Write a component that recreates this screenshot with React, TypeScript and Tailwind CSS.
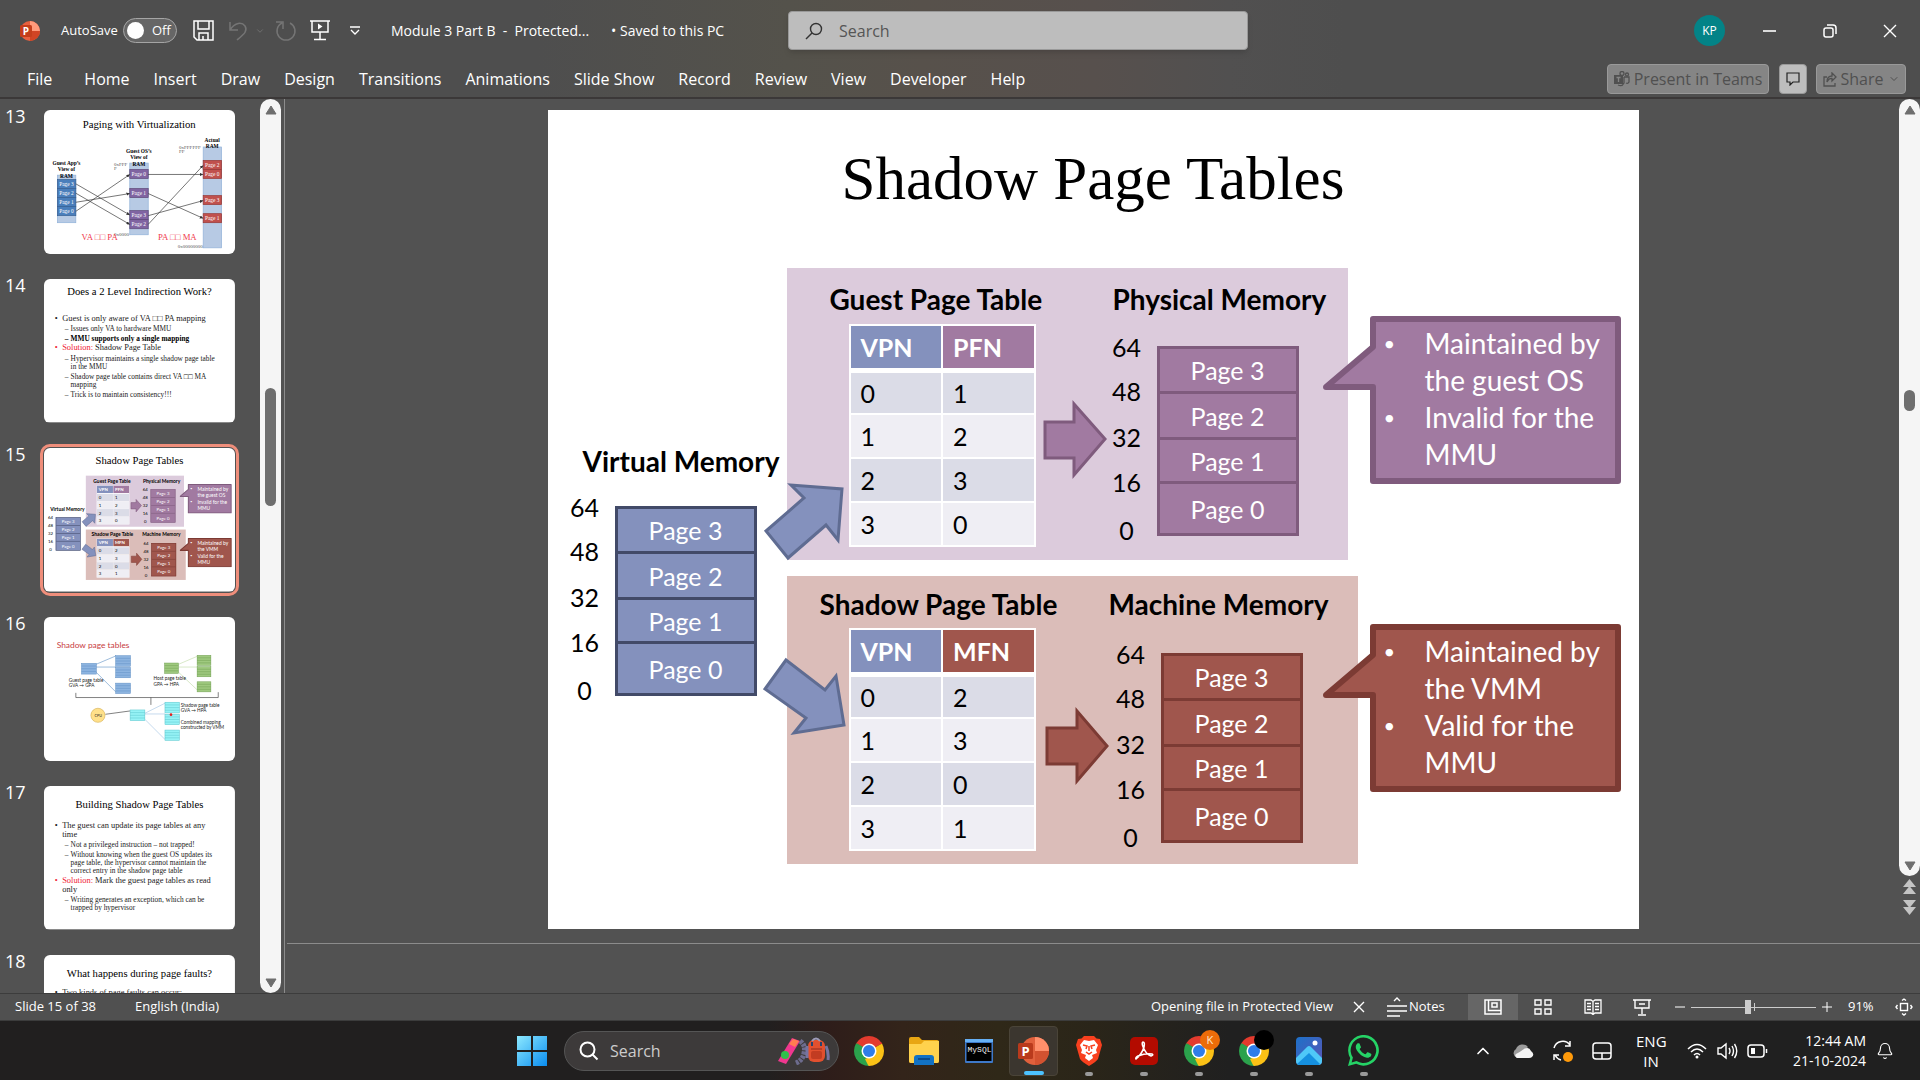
import React from 'react';
import { ChevronDown, ChevronUp, Bell } from 'lucide-react';

/* ---------- Slide content ---------- */

type Tone = 'blue' | 'purple' | 'red';

const stackTone: Record<Tone, string> = {
  blue: 'bg-[#8491bd] border-[#424a68] divide-[#424a68]',
  purple: 'bg-[#a17aa1] border-[#7f5b7d] divide-[#7f5b7d]',
  red: 'bg-[#a0564d] border-[#7c3b34] divide-[#7c3b34]',
};

function Heading({ at, children }: { at: string; children: React.ReactNode }) {
  return <h3 className={`absolute whitespace-nowrap text-[28px] font-bold leading-8 text-black ${at}`}>{children}</h3>;
}

function MemoryStack({ at, tone }: { at: string; tone: Tone }) {
  return (
    <div className={`absolute flex items-start text-[25px] ${at}`}>
      <div className="-mt-[14px] grid w-10 grid-rows-[44px_46px_45px_48px_30px] text-center leading-[30px] text-black">
        {[64, 48, 32, 16, 0].map((n) => (
          <span key={n}>{n}</span>
        ))}
      </div>
      <div
        className={`ml-[10px] grid h-[190px] w-[142px] grid-rows-[46fr_47fr_45fr_50fr] divide-y-[3px] border-[3px] text-center leading-[30px] text-white ${stackTone[tone]}`}
      >
        {[3, 2, 1, 0].map((n) => (
          <div key={n} className="flex items-center justify-center">
            Page {n}
          </div>
        ))}
      </div>
    </div>
  );
}

function PageTable({ at, second, head, values }: { at: string; second: string; head: string; values: number[] }) {
  return (
    <table className={`absolute w-[187px] table-fixed border-collapse border-2 border-white text-left text-[25px] leading-[30px] text-black ${at}`}>
      <thead>
        <tr className="h-[45px] border-b-[5px] border-white text-white">
          <th className="border-r-2 border-white bg-[#8491bd] pl-[10px] font-bold">VPN</th>
          <th className={`pl-[10px] font-bold ${head}`}>{second}</th>
        </tr>
      </thead>
      <tbody>
        {values.map((v, i) => (
          <tr key={i} className="h-11 border-b-2 border-white odd:bg-[#dbdce7] even:bg-[#efeef4]">
            <td className="border-r-2 border-white pl-[10px]">{i}</td>
            <td className="pl-[10px]">{v}</td>
          </tr>
        ))}
      </tbody>
    </table>
  );
}

function Callout({ at, fill, stroke, items }: { at: string; fill: string; stroke: string; items: string[][] }) {
  return (
    <div className={`absolute h-[168px] w-[298px] ${at}`}>
      <svg className="absolute inset-0" width="298" height="168" viewBox="0 0 298 168">
        <path d="M50 3H295V165H50V71H3L50 31Z" fill={fill} stroke={stroke} strokeWidth="6" strokeLinejoin="round" />
      </svg>
      <ul className="relative pl-[102px] pt-[9px] text-[28px] leading-[37px] text-white">
        {items.map((lines) => (
          <li key={lines[0]} className="relative whitespace-nowrap">
            <span className="absolute -left-[41px] text-xl leading-[37px]">•</span>
            {lines.map((l) => (
              <span key={l} className="block">
                {l}
              </span>
            ))}
          </li>
        ))}
      </ul>
    </div>
  );
}

function ShadowSlide() {
  return (
    <div className="relative h-[819px] w-[1091px] bg-white font-['Lato',sans-serif]">
      <h2 className="pt-[34px] text-center font-['Liberation_Serif',serif] text-[61px] leading-[70px] text-black">Shadow Page Tables</h2>
      <div className="absolute left-[239px] top-[158px] h-[292px] w-[561px] bg-[#dccbdc]" />
      <div className="absolute left-[239px] top-[466px] h-[288px] w-[571px] bg-[#dbbdb9]" />

      <Heading at="left-[35px] top-[335px]">Virtual Memory</Heading>
      <MemoryStack at="left-[17px] top-[396px]" tone="blue" />

      <Heading at="left-[282px] top-[173px]">Guest Page Table</Heading>
      <PageTable at="left-[301px] top-[214px]" second="PFN" head="bg-[#a17aa1]" values={[1, 2, 3, 0]} />
      <Heading at="left-[565px] top-[173px]">Physical Memory</Heading>
      <MemoryStack at="left-[559px] top-[236px]" tone="purple" />

      <Heading at="left-[272px] top-[478px]">Shadow Page Table</Heading>
      <PageTable at="left-[301px] top-[518px]" second="MFN" head="bg-[#a0564d]" values={[2, 3, 0, 1]} />
      <Heading at="left-[561px] top-[478px]">Machine Memory</Heading>
      <MemoryStack at="left-[563px] top-[543px]" tone="red" />

      <svg className="absolute inset-0" width="1091" height="819" viewBox="547 109 1091 819" strokeWidth="3">
        <path d="M765 530L803 497L790 484L841 488L837 539L825 524L787 557Z" fill="#8491bd" stroke="#5f6c92" />
        <path d="M785 659L824 689L835 675L843 724L793 732L805 717L764 688Z" fill="#8491bd" stroke="#5f6c92" />
        <path d="M1044 421H1073V403L1104 438L1073 474V457H1044Z" fill="#a17aa1" stroke="#7f5b7d" />
        <path d="M1046 727H1076V710L1106 745L1076 780V763H1046Z" fill="#a0564d" stroke="#7c3b34" />
      </svg>

      <Callout
        at="left-[775px] top-[206px]"
        fill="#a17aa1"
        stroke="#7f5b7d"
        items={[['Maintained by', 'the guest OS'], ['Invalid for the', 'MMU']]}
      />
      <Callout
        at="left-[775px] top-[514px]"
        fill="#a0564d"
        stroke="#7c3b34"
        items={[['Maintained by', 'the VMM'], ['Valid for the', 'MMU']]}
      />
    </div>
  );
}

/* ---------- Thumbnails ---------- */

function PagingThumb() {
  const apps = ['Page 3', 'Page 2', 'Page 1', 'Page 0'];
  const box = (x: number, y: number, label: string, fill: string, stroke: string) => (
    <g key={label + x}>
      <rect x={x} y={y} width="55" height="27" fill={fill} stroke={stroke} strokeWidth="2" />
      <text x={x + 27} y={y + 19} fontSize="16" fill="#fff" textAnchor="middle">
        {label}
      </text>
    </g>
  );
  return (
    <svg className="h-full w-full bg-white font-['Liberation_Serif',serif]" viewBox="135 47 570 429">
      <defs>
        <marker id="tip" viewBox="0 0 6 6" refX="6" refY="3" markerWidth="5" markerHeight="5" orient="auto">
          <path d="M0 0L6 3L0 6Z" fill="#333" />
        </marker>
      </defs>
      <text x="419" y="99" fontSize="32" textAnchor="middle">Paging with Virtualization</text>
      <g fill="#b7cae4" stroke="#8fb0d8" strokeWidth="2">
        <rect x="175" y="241" width="55" height="142" />
        <rect x="391" y="205" width="55" height="214" />
        <rect x="610" y="157" width="55" height="301" />
      </g>
      <g fontSize="16" fontWeight="bold" textAnchor="middle">
        <text x="202" y="210">Guest App’s</text>
        <text x="202" y="229">View of</text>
        <text x="202" y="249">RAM</text>
        <text x="418" y="174">Guest OS’s</text>
        <text x="418" y="193">View of</text>
        <text x="418" y="213">RAM</text>
        <text x="637" y="141">Actual</text>
        <text x="637" y="159">RAM</text>
      </g>
      <g fontSize="15" fill="#555">
        <text x="344" y="213">0xFFF</text>
        <text x="344" y="227">F</text>
        <text x="538" y="162">0xFFFFFF</text>
        <text x="538" y="176">FF</text>
        <text x="344" y="423">0x0000</text>
        <text x="534" y="459">0x00000000</text>
      </g>
      {apps.map((p, i) => box(175, 254 + i * 27, p, '#4a7ebb', '#376092'))}
      {box(391, 224, 'Page 0', '#8064a2', '#5c4776')}
      {box(391, 281, 'Page 1', '#8064a2', '#5c4776')}
      {box(391, 347, 'Page 3', '#8064a2', '#5c4776')}
      {box(391, 374, 'Page 2', '#8064a2', '#5c4776')}
      {box(610, 197, 'Page 2', '#c0504d', '#943734')}
      {box(610, 224, 'Page 0', '#c0504d', '#943734')}
      {box(610, 302, 'Page 3', '#c0504d', '#943734')}
      {box(610, 356, 'Page 1', '#c0504d', '#943734')}
      <g stroke="#333" strokeWidth="2">
        <path d="M230 267L391 360" markerEnd="url(#tip)" />
        <path d="M230 295L391 388" markerEnd="url(#tip)" />
        <path d="M230 322L391 296" markerEnd="url(#tip)" />
        <path d="M230 349L391 239" markerEnd="url(#tip)" />
        <path d="M446 239H610" markerEnd="url(#tip)" />
        <path d="M446 296L610 370" markerEnd="url(#tip)" />
        <path d="M446 362L610 317" markerEnd="url(#tip)" />
        <path d="M446 388L610 212" markerEnd="url(#tip)" />
      </g>
      <g fontSize="26" fill="#f0384c">
        <text x="247" y="435">VA □□ PA</text>
        <text x="475" y="435">PA □□ MA</text>
      </g>
    </svg>
  );
}

function TreeThumb() {
  const node = (x: number, y: number, w: number, h: number, fill: string, line: string) => (
    <g key={`${x}-${y}`} stroke={line} strokeWidth="1.5">
      <rect x={x} y={y} width={w} height={h} fill={fill} />
      <path d={`M${x} ${y + h / 4}h${w}M${x} ${y + h / 2}h${w}M${x} ${y + (3 * h) / 4}h${w}`} />
    </g>
  );
  return (
    <svg className="h-full w-full bg-white font-['Lato',sans-serif]" viewBox="135 563 570 429" fill="none">
      <text x="173" y="656" fontSize="25" fill="#c73d42">Shadow page tables</text>
      <path d="M290 704L349 679M290 712H349M290 727L349 786" stroke="#6f9ccb" strokeWidth="2" />
      {node(247, 701, 44, 32, '#8db4e0', '#5f8fc4')}
      {node(349, 678, 44, 32, '#8db4e0', '#5f8fc4')}
      {node(349, 713, 44, 31, '#8db4e0', '#5f8fc4')}
      {node(349, 760, 44, 31, '#8db4e0', '#5f8fc4')}
      <path d="M536 704L592 680M536 712H592M536 727L592 780" stroke="#c6deae" strokeWidth="2" />
      {node(495, 700, 41, 31, '#9fc97f', '#6f9f50')}
      {node(592, 677, 41, 30, '#9fc97f', '#6f9f50')}
      {node(592, 711, 41, 30, '#9fc97f', '#6f9f50')}
      {node(592, 756, 41, 30, '#9fc97f', '#6f9f50')}
      <path d="M230 789V803H655V787M454 803V825" stroke="#444" strokeWidth="2" />
      <path d="M436 850L496 820M436 852H496M436 868L496 928" stroke="#a9c8e6" strokeWidth="2" />
      <path d="M318 853L392 843" stroke="#444" strokeWidth="2" />
      <circle cx="296" cy="856" r="21" fill="#ffe08a" stroke="#d8b45c" strokeWidth="2" />
      {node(392, 840, 44, 32, '#96f3f6', '#5cc4cc')}
      {node(496, 817, 43, 32, '#96f3f6', '#5cc4cc')}
      {node(496, 853, 43, 31, '#96f3f6', '#5cc4cc')}
      {node(496, 900, 43, 31, '#96f3f6', '#5cc4cc')}
      <circle cx="514" cy="854" r="4" fill="#e02020" />
      <g fontSize="14" fill="#222">
        <text x="286" y="861" fontSize="11">CPU</text>
        <text x="209" y="756">Guest page table</text>
        <text x="209" y="773">GVA → GPA</text>
        <text x="462" y="752">Host page table</text>
        <text x="462" y="769">GPA → HPA</text>
        <text x="543" y="830">Shadow page table</text>
        <text x="543" y="847">GVA → HPA</text>
        <text x="543" y="882">Combined mapping</text>
        <text x="543" y="898">constructed by VMM</text>
      </g>
    </svg>
  );
}

/* Slides are drawn on a 1091 x 819 canvas and shown reduced. */
function Reduced({ children }: { children: React.ReactNode }) {
  return <div className="h-[819px] w-[1091px] origin-top-left scale-[0.175] bg-white">{children}</div>;
}

type Line = { kind: 'top' | 'sub'; lines: string[]; lead?: string; bold?: boolean };

function TextSlide({ title, pad, body }: { title: string; pad: string; body: Line[] }) {
  return (
    <Reduced>
      <div className={`font-['Liberation_Serif',serif] text-[#222] ${pad}`}>
        <h3 className="whitespace-nowrap text-center text-[61px] leading-[70px] text-black">{title}</h3>
        <ul className="whitespace-nowrap pt-[86px]">
          {body.map((b) => (
            <li
              key={b.lines[0]}
              className={
                b.kind === 'top'
                  ? 'relative mt-1 pl-[104px] text-5xl leading-[52px]'
                  : `relative mt-[11px] pl-[152px] text-[42px] leading-[46px] ${b.bold ? 'font-bold text-black' : ''}`
              }
            >
              <span className={b.kind === 'top' ? `absolute left-[62px] ${b.lead ? 'text-[#f01c34]' : ''}` : 'absolute left-[118px]'}>
                {b.kind === 'top' ? '•' : '–'}
              </span>
              {b.lines.map((l, i) => (
                <span key={l} className="block">
                  {i === 0 && b.lead && <span className="text-[#f01c34]">{b.lead} </span>}
                  {l}
                </span>
              ))}
            </li>
          ))}
        </ul>
      </div>
    </Reduced>
  );
}

const indirection: Line[] = [
  { kind: 'top', lines: ['Guest is only aware of VA □□ PA mapping'] },
  { kind: 'sub', lines: ['Issues only VA to hardware MMU'] },
  { kind: 'sub', lines: ['MMU supports only a single mapping'], bold: true },
  { kind: 'top', lead: 'Solution:', lines: ['Shadow Page Table'] },
  { kind: 'sub', lines: ['Hypervisor maintains a single shadow page table', 'in the MMU'] },
  { kind: 'sub', lines: ['Shadow page table contains direct VA □□ MA', 'mapping'] },
  { kind: 'sub', lines: ['Trick is to maintain consistency!!!'] },
];

const building: Line[] = [
  { kind: 'top', lines: ['The guest can update its page tables at any', 'time'] },
  { kind: 'sub', lines: ['Not a privileged instruction – not trapped!'] },
  {
    kind: 'sub',
    lines: ['Without knowing when the guest OS updates its', 'page table, the hypervisor cannot maintain the', 'correct entry in the shadow page table'],
  },
  { kind: 'top', lead: 'Solution:', lines: ['Mark the guest page tables as read', 'only'] },
  { kind: 'sub', lines: ['Writing generates an exception, which can be', 'trapped by hypervisor'] },
];

const thumbs = [
  { n: 13, view: <PagingThumb /> },
  { n: 14, view: <TextSlide title="Does a 2 Level Indirection Work?" pad="pt-9" body={indirection} /> },
  { n: 15, view: <Reduced><ShadowSlide /></Reduced> },
  { n: 16, view: <TreeThumb /> },
  { n: 17, view: <TextSlide title="Building Shadow Page Tables" pad="pt-[68px] [&_ul]:pt-[56px]" body={building} /> },
  {
    n: 18,
    view: (
      <TextSlide title="What happens during page faults?" pad="pt-[68px] [&_ul]:pt-[46px]" body={[{ kind: 'top', lines: ['Two kinds of page faults can occur:'] }]} />
    ),
  },
];

function ThumbnailPane() {
  return (
    <nav aria-label="Slides" className="flex w-[260px] shrink-0 flex-col gap-[25px] overflow-hidden pt-[11px]">
      {thumbs.map(({ n, view }) => (
        <button key={n} className="flex h-36 w-[235px] shrink-0 items-start pl-[5px] text-left">
          <span className="w-[39px] shrink-0 text-lg leading-3 text-white">{n}</span>
          <span
            className={`block h-36 w-[191px] shrink-0 overflow-hidden rounded-md ${
              n === 15 ? 'outline-[3px] outline-offset-1 outline-[#ef8e7b]' : ''
            }`}
          >
            {view}
          </span>
        </button>
      ))}
    </nav>
  );
}

/* ---------- Window chrome ---------- */

function ScrollBar({ thumb, className }: { thumb: string; className: string }) {
  return (
    <div className={`flex w-[21px] flex-col items-center rounded-full bg-[#f5f5f5] ${className}`}>
      <button aria-label="Scroll up" className="h-5 pt-[2px]">
        <svg width="12" height="10" viewBox="0 0 12 10"><path d="M6 1L11 9H1Z" fill="#6e6e6e" stroke="#6e6e6e" strokeLinejoin="round" /></svg>
      </button>
      <div className="flex-1">
        <div className={`w-[11px] rounded-full bg-[#6e6e6e] ${thumb}`} />
      </div>
      <button aria-label="Scroll down" className="h-5">
        <svg width="12" height="10" viewBox="0 0 12 10"><path d="M6 9L1 1H11Z" fill="#6e6e6e" stroke="#6e6e6e" strokeLinejoin="round" /></svg>
      </button>
    </div>
  );
}

function TitleBar() {
  return (
    <header className="flex h-[61px] items-center text-[13px] text-white">
      <div className="flex w-[788px] shrink-0 items-center">
        <svg className="ml-[19px]" width="22" height="22" viewBox="0 0 22 22">
          <circle cx="11" cy="11" r="10" fill="#e8603f" />
          <path d="M11 1a10 10 0 0 1 10 10H11Z" fill="#ff9a7b" />
          <path d="M11 21a10 10 0 0 0 10-10H11Z" fill="#d14424" />
          <rect x="1" y="5" width="12" height="12" rx="1.5" fill="#c43e1c" />
          <text x="3.8" y="14.5" fontSize="10" fontWeight="bold" fill="#fff">P</text>
        </svg>
        <label htmlFor="autosave" className="ml-5 w-[62px] whitespace-nowrap">AutoSave</label>
        <button id="autosave" role="switch" aria-checked="false" className="flex h-[25px] w-[54px] items-center gap-2 rounded-full border border-[#a5a5a5] bg-[#666] pl-[3px]">
          <span className="h-[17px] w-[17px] rounded-full bg-white" />
          Off
        </button>
        <button aria-label="Save" className="ml-4">
          <svg width="21" height="21" viewBox="0 0 21 21" fill="none" stroke="#fff" strokeWidth="1.5"><path d="M1 1H20V20H4L1 17ZM5 1V9H16V1M6 20V13H15V20M10 20V16" /></svg>
        </button>
        <button aria-label="Undo" className="ml-[14px] flex items-center gap-[7px]">
          <svg width="20" height="20" viewBox="0 0 20 20" fill="none" stroke="#757575" strokeWidth="1.5"><path d="M2 1V9H10M2 9C7 1 14 1 17 5C20 10 16 13 9 19" /></svg>
          <ChevronDown size={10} color="#757575" />
        </button>
        <button aria-label="Redo" className="ml-[10px]">
          <svg width="22" height="20" viewBox="0 0 22 20" fill="none" stroke="#757575" strokeWidth="1.5"><path d="M1 1H8V8M7 2A9 9 0 1 0 15 2" /></svg>
        </button>
        <button aria-label="Start from beginning" className="ml-[13px]">
          <svg width="20" height="21" viewBox="0 0 20 21" fill="none" stroke="#fff" strokeWidth="1.5"><path d="M0 1H20M2 1V12H18V1M10 12V19M4 19.5H16" /><path d="M8 3.500L12.500 6.500L8 9.500Z" fill="#fff" stroke="none" /></svg>
        </button>
        <button aria-label="Customize toolbar" className="ml-5">
          <svg width="10" height="10" viewBox="0 0 10 10" fill="none" stroke="#fff" strokeWidth="1.3"><path d="M0 1H10M1 4L5 8L9 4" /></svg>
        </button>
        <h1 className="ml-[31px] whitespace-pre text-sm">Module 3 Part B  -  Protected...</h1>
        <span className="ml-[22px] whitespace-nowrap text-sm">• Saved to this PC</span>
      </div>
      <label className="flex h-[39px] w-[460px] items-center gap-4 rounded-sm border border-[#999] bg-[#bdbdbd] pl-4 shadow-md">
        <svg width="18" height="18" viewBox="0 0 18 18" fill="none" stroke="#333" strokeWidth="1.4"><circle cx="11" cy="7" r="5.500" /><path d="M7 11L1 17" /></svg>
        <input aria-label="Search" placeholder="Search" className="w-80 bg-transparent text-base text-[#444] outline-none placeholder:text-[#555]" />
      </label>
      <div className="flex flex-1 items-center justify-end pr-[23px]">
        <span className="mr-[30px] flex h-[31px] w-[31px] items-center justify-center rounded-full bg-[#038387] text-xs">KP</span>
        <button aria-label="Minimize" className="w-15 pl-2"><svg width="13" height="14" viewBox="0 0 13 14"><path d="M0 7H13" stroke="#fff" strokeWidth="1.6" /></svg></button>
        <button aria-label="Restore" className="w-15 pl-2"><svg width="14" height="14" viewBox="0 0 14 14" fill="none" stroke="#fff" strokeWidth="1.500"><rect x="1" y="4" width="9" height="9" rx="2" /><path d="M4 1H10Q13 1 13 4V10" /></svg></button>
        <button aria-label="Close" className="pl-2"><svg width="14" height="14" viewBox="0 0 14 14"><path d="M1 1L13 13M13 1L1 13" stroke="#fff" strokeWidth="1.400" /></svg></button>
      </div>
    </header>
  );
}

const tabs = ['Home', 'Insert', 'Draw', 'Design', 'Transitions', 'Animations', 'Slide Show', 'Record', 'Review', 'View', 'Developer', 'Help'];

function RibbonTabs() {
  return (
    <div className="flex h-[38px] items-center border-b-2 border-[#3b3838] pl-[27px] pr-[14px] text-base text-white">
      <div className="flex flex-1 items-center gap-6">
        <button className="mr-2">File</button>
        {tabs.map((t) => (
          <button key={t} className="whitespace-nowrap">{t}</button>
        ))}
      </div>
      <button className="flex h-[30px] w-[162px] items-center justify-center gap-1 whitespace-nowrap rounded border border-[#999] bg-[#858585] text-[#505050]">
        <svg width="16" height="16" viewBox="0 0 16 16" fill="none" stroke="#505050" strokeWidth="1.300"><rect x="0" y="4" width="9" height="9" fill="#505050" stroke="none" /><path d="M2.500 6.500H6.500M4.500 6.500V11" stroke="#858585" /><circle cx="8" cy="2.500" r="2" /><circle cx="13" cy="3.500" r="1.500" /><path d="M10 6H15V11Q14 13 12 12M10 6V12Q8 16 4 14" /></svg>
        Present in Teams
      </button>
      <button aria-label="Comments" className="ml-[10px] flex h-[30px] w-7 items-center justify-center rounded border border-[#999] bg-[#bdbdbd]">
        <svg width="14" height="14" viewBox="0 0 14 14" fill="none" stroke="#222" strokeWidth="1.200"><path d="M1 1H13V10H7L4 13V10H1Z" /></svg>
      </button>
      <button className="ml-[9px] flex h-[30px] w-[90px] items-center justify-center gap-1 rounded border border-[#999] bg-[#858585] text-[#505050]">
        <svg width="14" height="15" viewBox="0 0 14 15" fill="none" stroke="#505050" strokeWidth="1.300"><path d="M4 5H1V14H12V11M4 10Q4 4 9 4V1L13 5L9 9V6.500Q6 6 4 10Z" /></svg>
        Share
        <ChevronDown size={12} />
      </button>
    </div>
  );
}

function StatusBar() {
  return (
    <footer className="flex h-[28px] items-center border-y border-[#3c3c3c] bg-[#505050] text-[13px] text-white">
      <span className="w-[121px] whitespace-nowrap pl-[15px]">Slide 15 of 38</span>
      <span className="flex-1 pl-[14px]">English (India)</span>
      <span className="whitespace-nowrap">Opening file in Protected View</span>
      <button aria-label="Cancel" className="ml-5"><svg width="12" height="12" viewBox="0 0 12 12"><path d="M1 1L11 11M11 1L1 11" stroke="#fff" strokeWidth="1.400" /></svg></button>
      <button className="ml-[22px] flex w-[81px] items-center gap-[2px]">
        <svg width="20" height="20" viewBox="0 0 20 20" fill="none" stroke="#fff" strokeWidth="1.400"><path d="M7 4L10 1L13 4M0 9H20M0 14H20M0 19H13" /></svg>
        Notes
      </button>
      <button aria-label="Normal" className="flex h-[26px] w-[50px] items-center justify-center bg-[#666]">
        <svg width="18" height="16" viewBox="0 0 18 16" fill="none" stroke="#fff" strokeWidth="1.500"><rect x="1" y="1" width="16" height="14" /><path d="M4.500 1V11.500H17" /><rect x="8" y="4" width="5" height="4" /></svg>
      </button>
      <button aria-label="Slide sorter" className="flex w-[50px] justify-center">
        <svg width="18" height="16" viewBox="0 0 18 16" fill="none" stroke="#fff" strokeWidth="1.400"><path d="M1 1H7V6H1ZM11 1H17V6H11ZM1 10H7V15H1ZM11 10H17V15H11Z" /></svg>
      </button>
      <button aria-label="Reading view" className="flex w-[49px] justify-center">
        <svg width="18" height="16" viewBox="0 0 18 16" fill="none" stroke="#fff" strokeWidth="1.300"><path d="M1 1H7L9 2.500L11 1H17V14H11L9 15.500L7 14H1ZM9 2.500V15M3 4.500H7M3 7.500H7M3 10.500H7M11 4.500H15M11 7.500H15M11 10.500H15" /></svg>
      </button>
      <button aria-label="Slide show" className="flex w-[50px] justify-center">
        <svg width="18" height="17" viewBox="0 0 18 17" fill="none" stroke="#fff" strokeWidth="1.400"><path d="M0 1H18M2 1V9H16V1M6 5H12M9 9V15M5 16H13" /></svg>
      </button>
      <button aria-label="Zoom out" className="ml-2"><svg width="10" height="10" viewBox="0 0 10 10"><path d="M0 5H10" stroke="#fff" /></svg></button>
      <label className="relative ml-[6px] flex h-5 w-[125px] items-center">
        <span className="h-px w-full bg-[#ccc]" />
        <span className="absolute left-[63px] h-2 w-px bg-[#ccc]" />
        <span className="absolute left-[54px] h-[14px] w-[6px] bg-[#ccc]" />
        <input type="range" aria-label="Zoom" min="10" max="400" defaultValue="91" className="absolute inset-0 w-full opacity-0" />
      </label>
      <button aria-label="Zoom in" className="ml-[6px]"><svg width="10" height="10" viewBox="0 0 10 10"><path d="M0 5H10M5 0V10" stroke="#fff" /></svg></button>
      <span className="ml-4 w-[47px]">91%</span>
      <button aria-label="Fit to window" className="mr-[7px]">
        <svg width="18" height="18" viewBox="0 0 18 18" fill="none" stroke="#fff" strokeWidth="1.400"><rect x="5.500" y="5.500" width="7" height="7" /><path d="M7 2.500L9 1L11 2.500M7 15.500L9 17L11 15.500M2.500 7L1 9L2.500 11M15.500 7L17 9L15.500 11" /></svg>
      </button>
    </footer>
  );
}

/* ---------- Taskbar ---------- */

function Chrome({ badge }: { badge?: React.ReactNode }) {
  return (
    <svg width="36" height="36" viewBox="0 0 36 36" overflow="visible">
      <path d="M18 18L5.010 10.500A15 15 0 0 1 30.990 10.500Z" fill="#e33b2e" />
      <path d="M18 18L30.990 10.500A15 15 0 0 1 18 33Z" fill="#fbc116" />
      <path d="M18 18L18 33A15 15 0 0 1 5.010 10.500Z" fill="#2ba24c" />
      <path d="M18 11H31.300L30 9H18Z" fill="#e33b2e" />
      <path d="M11.900 21.500L5.300 10L12 14Z" fill="#2ba24c" />
      <path d="M24 21.500L17.500 33L14 26Z" fill="#fbc116" />
      <circle cx="18" cy="18" r="7.500" fill="#fff" />
      <circle cx="18" cy="18" r="6" fill="#2f7de9" />
      {badge}
    </svg>
  );
}

function TaskButton({ label, active, running, children }: { label: string; active?: boolean; running?: boolean; children: React.ReactNode }) {
  return (
    <button
      aria-label={label}
      className={`relative mx-[3px] flex h-[50px] w-[49px] items-center justify-center rounded ${active ? 'border border-[#4a4438] bg-[#3b362f]' : ''}`}
    >
      {children}
      {(active || running) && <span className={`absolute bottom-0 h-1 rounded-full ${active ? 'w-5 bg-[#4cc2ff]' : 'w-2 bg-[#9a9a9a]'}`} />}
    </button>
  );
}

function TaskBar() {
  return (
    <div className="flex h-[59px] items-center bg-[linear-gradient(90deg,#211f1f_0%,#211f1f_40%,#2e1d1a_43%,#33241a_47%,#2f2818_52%,#2a2519_57%,#202020_64%)] text-[15px] text-white">
      <div className="flex flex-1 items-center justify-end">
        <button aria-label="Start" className="shrink-0">
          <svg width="30" height="30" viewBox="0 0 30 30">
            <defs><linearGradient id="win" x1="0" y1="0" x2="1" y2="1"><stop offset="0" stopColor="#8de9ff" /><stop offset="1" stopColor="#0a8df0" /></linearGradient></defs>
            <path d="M0 0H14V14H0ZM16 0H30V14H16ZM0 16H14V30H0ZM16 16H30V30H16Z" fill="url(#win)" />
          </svg>
        </button>
        <label className="ml-[17px] mr-[2px] flex h-10 w-[275px] shrink-0 items-center rounded-full border border-[#555] bg-[#3d3a3a] pl-[14px] pr-2">
          <svg width="20" height="20" viewBox="0 0 20 20" fill="none" stroke="#fff" strokeWidth="2"><circle cx="8.500" cy="8.500" r="7" /><path d="M13.500 13.500L18.500 18.500" /></svg>
          <input aria-label="Search the computer" placeholder="Search" className="ml-[11px] w-40 flex-1 bg-transparent text-base outline-none placeholder:text-[#ccc]" />
          <svg width="54" height="28" viewBox="0 0 54 28">
            <path d="M16 1L24 4L10 27L2 24Z" fill="#f0378f" /><path d="M17 2L23 4L19 10L13 7Z" fill="#ff7d50" /><circle cx="9" cy="18" r="4" fill="#2fc04b" />
            <path d="M24 4Q30 8 28 16Q27 23 20 26" fill="none" stroke="#6d6c8e" strokeWidth="5" strokeDasharray="3 1" />
            <rect x="32" y="3" width="17" height="22" rx="6" fill="#e2502f" /><path d="M36 4Q40-1 44 4" fill="none" stroke="#9d9bb8" strokeWidth="2" />
            <path d="M31 9V21M50 9Q53 16 52 23" stroke="#7774a0" strokeWidth="3" fill="none" /><path d="M36 5V9M45 5V9" stroke="#28456f" strokeWidth="2" /><rect x="35" y="14" width="11" height="8" rx="2" fill="#c23c22" /><path d="M35 12H46" stroke="#8d2d22" />
          </svg>
        </label>
        <TaskButton label="Chrome"><Chrome /></TaskButton>
        <TaskButton label="File Explorer">
          <svg width="30" height="28" viewBox="0 0 30 28"><path d="M0 2Q0 0 2 0H10L13 3H28Q30 3 30 5V24Q30 26 28 26H2Q0 26 0 24Z" fill="#e8a613" /><path d="M0 7H12L15 4H30V24Q30 26 28 26H2Q0 26 0 24Z" fill="#ffd24d" /><path d="M5 28V21Q5 18 8 18H22Q25 18 25 21V28Z" fill="#1272c4" /><path d="M9 22H21" stroke="#0a4c8c" strokeWidth="2" /></svg>
        </TaskButton>
        <TaskButton label="MySQL">
          <svg width="28" height="24" viewBox="0 0 28 24"><rect width="28" height="24" rx="1" fill="#3e79c9" /><path d="M0 0H28V3H0Z" fill="#66b0f4" /><rect x="1.500" y="4" width="25" height="18" fill="#000" /><text x="2.500" y="13" fontSize="8" fill="#eee" fontFamily="Liberation Mono">MySQL</text></svg>
        </TaskButton>
        <TaskButton label="PowerPoint" active>
          <svg width="32" height="30" viewBox="0 0 32 30"><circle cx="17" cy="15" r="14" fill="#e0603c" /><path d="M17 1a14 14 0 0 1 14 14H17Z" fill="#ff8f6b" /><path d="M17 29a14 14 0 0 0 14-14H17Z" fill="#d35230" /><rect x="0" y="7" width="15" height="16" rx="1.500" fill="#b93a1c" /><text x="3.500" y="19.500" fontSize="13" fontWeight="bold" fill="#fff">P</text></svg>
        </TaskButton>
        <TaskButton label="Brave" running>
          <svg width="26" height="30" viewBox="0 0 26 30"><path d="M8 0H18L20.500 2.500L24 3L26 9L22 23Q20 26 13 30Q6 26 4 23L0 9L2 3L5.500 2.500Z" fill="#f8401e" /><path d="M13 5L18 4L22 9L20 14L21 17L16 19L17 22L13 25L9 22L10 19L5 17L6 14L4 9L8 4Z" fill="#fff" /><path d="M7 9L11 10L10 13M19 9L15 10L16 13M10 16L13 18L16 16M13 10V15" fill="none" stroke="#f8401e" strokeWidth="1.500" /></svg>
        </TaskButton>
        <TaskButton label="Acrobat" running>
          <svg width="28" height="28" viewBox="0 0 28 28"><rect width="28" height="28" rx="5" fill="#b30b00" /><path d="M6 22Q12 17 14 10Q15 5 13 5Q11 6 14 12Q17 18 21 19Q24 18 22 17Q16 16 8 19Q5 21 6 22Z" fill="none" stroke="#fff" strokeWidth="1.600" /></svg>
        </TaskButton>
        <TaskButton label="Chrome, profile K" running>
          <Chrome badge={<><circle cx="29" cy="7" r="10" fill="#ec6c09" /><text x="25.500" y="11" fontSize="11" fill="#ffe9d0">K</text></>} />
        </TaskButton>
        <TaskButton label="Chrome, second profile" running><Chrome badge={<circle cx="28" cy="7" r="10" fill="#000" />} /></TaskButton>
        <TaskButton label="Photos" running>
          <svg width="26" height="28" viewBox="0 0 26 28"><defs><linearGradient id="ph" x1="0" y1="0" x2="1" y2="1"><stop offset="0" stopColor="#1d71c9" /><stop offset="1" stopColor="#5a55b5" /></linearGradient></defs><rect width="26" height="28" rx="4" fill="url(#ph)" /><path d="M0 21L11 10Q13 8 15 10L26 21V24Q26 28 22 28H4Q0 28 0 24Z" fill="#4fc8f8" /><path d="M13 16L24 27Q23 28 22 28H4Q2 28 1 27Z" fill="#1590e0" /><circle cx="19" cy="6" r="2.500" fill="#fff" /></svg>
        </TaskButton>
        <TaskButton label="WhatsApp" running>
          <svg width="31" height="31" viewBox="0 0 24 24" fill="#25d366"><path d="M17.472 14.382c-.297-.149-1.758-.867-2.030-.967-.273-.099-.471-.148-.670.150-.197.297-.767.966-.940 1.164-.173.199-.347.223-.644.075-.297-.150-1.255-.463-2.390-1.475-.883-.788-1.480-1.761-1.653-2.059-.173-.297-.018-.458.130-.606.134-.133.298-.347.446-.520.149-.174.198-.298.298-.497.099-.198.050-.371-.025-.520-.075-.149-.669-1.612-.916-2.207-.242-.579-.487-.500-.669-.510-.173-.008-.371-.010-.570-.010-.198 0-.520.074-.792.372-.272.297-1.040 1.016-1.040 2.479 0 1.462 1.065 2.875 1.213 3.074.149.198 2.096 3.200 5.077 4.487.709.306 1.262.489 1.694.625.712.227 1.360.195 1.871.118.571-.085 1.758-.719 2.006-1.413.248-.694.248-1.289.173-1.413-.074-.124-.272-.198-.570-.347z" /><path d="M0 24L1.700 17.800A11.900 11.900 0 1 1 6.300 22.300ZM6.600 20.200A9.900 9.900 0 1 0 3.800 17.500L2.800 21.200Z" fillRule="evenodd" /></svg>
        </TaskButton>
      </div>
      <div className="flex w-[529px] shrink-0 items-center justify-end">
        <button aria-label="Hidden icons"><ChevronUp size={20} /></button>
        <svg className="ml-[19px]" width="22" height="16" viewBox="0 0 22 16"><path d="M5 15A5 5 0 0 1 4 6A7 7 0 0 1 16 4Z" fill="#9b9b9b" /><path d="M5 15Q2 13 4 11Q8 9 12 6Q17 3 19 8Q23 11 20 14Q19 15 17 15Z" fill="#f4f4f4" /></svg>
        <svg className="ml-[18px]" width="22" height="24" viewBox="0 0 22 24" fill="none" stroke="#fff" strokeWidth="1.500"><path d="M2 9A9 9 0 0 1 18 6M18 2V7H13M9 21Q5 20 3 16M2 21V16H7" /><circle cx="16" cy="18" r="5" fill="#ff9a0a" stroke="none" /></svg>
        <svg className="ml-[18px]" width="20" height="18" viewBox="0 0 20 18" fill="none" stroke="#fff" strokeWidth="1.500"><rect x="1" y="1" width="18" height="16" rx="3" /><path d="M1 11H19M10 11V17" /></svg>
        <button className="ml-[24px] w-[30px] whitespace-nowrap text-center text-[15px] leading-5">ENG<br />IN</button>
        <svg className="ml-[21px]" width="20" height="16" viewBox="0 0 20 16" fill="none" stroke="#fff" strokeWidth="1.500"><path d="M1 6Q10-3 19 6M4 9Q10 3 16 9M7 12Q10 9 13 12" /><circle cx="10" cy="14" r="1.500" fill="#fff" stroke="none" /></svg>
        <svg className="ml-[10px]" width="21" height="18" viewBox="0 0 21 18" fill="none" stroke="#fff" strokeWidth="1.400"><path d="M1 6H4L9 2V16L4 12H1ZM12 6Q14 9 12 12M15 4Q18 9 15 14M17.500 2Q22 9 17.500 16" /></svg>
        <svg className="ml-[9px]" width="21" height="14" viewBox="0 0 21 14" fill="none" stroke="#fff" strokeWidth="1.500"><rect x="1" y="1" width="16" height="12" rx="3" /><path d="M19.500 5V9" /><rect x="4" y="4" width="4" height="6" fill="#fff" stroke="none" /></svg>
        <button className="ml-3 w-[86px] whitespace-nowrap text-right text-sm leading-5">12:44 AM<br />21-10-2024</button>
        <button aria-label="Notifications" className="ml-[10px] mr-[26px]"><Bell size={18} strokeWidth={1.5} /></button>
      </div>
    </div>
  );
}

export default function App() {
  return (
    <div className="flex h-screen flex-col overflow-hidden bg-[#525252] font-['Open_Sans',sans-serif]">
      <div className="bg-[linear-gradient(90deg,#4e4e4e_28%,#54524b_41%,#57514b_48%,#57504d_57%,#515050_64%,#4e4e4e_70%)]">
        <TitleBar />
        <RibbonTabs />
      </div>
      <div className="flex min-h-0 flex-1">
        <ThumbnailPane />
        <ScrollBar className="" thumb="mt-[269px] h-[118px]" />
        <div className="ml-[3px] w-px bg-[#8c8c8c]" />
        <main className="ml-[2px] flex min-w-0 flex-1 flex-col">
          <div className="flex min-h-0 flex-1">
            <div className="flex flex-1 justify-center pt-[11px]">
              <section aria-label="Slide 15" className="shrink-0 self-start">
                <ShadowSlide />
              </section>
            </div>
            <div className="flex w-[21px] flex-col items-center">
              <ScrollBar className="h-[777px]" thumb="mt-[271px] h-[21px]" />
              <button aria-label="Previous slide" className="mt-[3px]"><svg width="13" height="17" viewBox="0 0 13 17" fill="#c4c4c4"><path d="M6.500 0L13 8H0ZM6.500 7L13 15H0Z" /></svg></button>
              <button aria-label="Next slide" className="mt-[3px]"><svg width="13" height="17" viewBox="0 0 13 17" fill="#c4c4c4"><path d="M6.500 16L0 8H13ZM6.500 9L0 1H13Z" /></svg></button>
            </div>
          </div>
          <div className="h-[50px] border-t border-[#8c8c8c]" />
        </main>
      </div>
      <StatusBar />
      <TaskBar />
    </div>
  );
}
